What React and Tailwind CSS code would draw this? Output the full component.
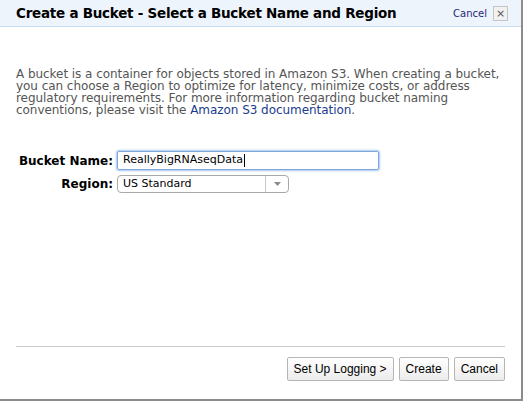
export default function App() {
  return (
    <div className="h-[403px] w-[526px] bg-white font-['DejaVu_Sans',Verdana,sans-serif]">
      <div className="flex h-[401px] w-[523px] flex-col border-r-2 border-b-2 border-[#8c8c8c]">
        <div className="flex h-[27px] shrink-0 items-center justify-between border-b border-[#c9ddf1] bg-[#eef4fc] pl-[16px] pr-[13px]">
          <h1 className="text-[13.5px] font-bold tracking-[-0.25px] text-black">
            Create a Bucket - Select a Bucket Name and Region
          </h1>
          <div className="flex items-center gap-[6px]">
            <span className="text-[10px] text-[#1d2a7a]">Cancel</span>
            <span className="flex h-[15px] w-[15px] items-center justify-center border border-[#c4c4c4] bg-[#f1f1f1] text-[11px] leading-none text-[#555]">
              ×
            </span>
          </div>
        </div>

        <p className="mt-[41px] px-[16px] text-[12px] leading-[12px] tracking-[-0.05px] whitespace-nowrap text-[#555]">
          A bucket is a container for objects stored in Amazon S3. When creating a bucket,
          <br />
          you can choose a Region to optimize for latency, minimize costs, or address
          <br />
          regulatory requirements. For more information regarding bucket naming
          <br />
          conventions, please visit the{' '}
          <span className="text-[#1b3c8c]">Amazon S3 documentation</span>.
        </p>

        <div className="mt-[35px] grid grid-cols-[113px_auto] items-center gap-x-[4px] gap-y-[5px]">
          <label className="text-right text-[12px] font-bold text-black">Bucket Name:</label>
          <div className="flex h-[19px] w-[262px] items-center rounded-[2px] border border-[#7ea6d8] pl-[5px] shadow-[0_0_2px_1px_#a8c8ee] text-[11px] text-black">
            ReallyBigRNAseqData
            <span className="ml-[1px] h-[13px] w-px bg-black" />
          </div>
          <label className="text-right text-[12px] font-bold text-black">Region:</label>
          <div className="flex h-[18px] w-[172px] items-center rounded-[4px] border border-[#a9a9a9] bg-white text-[11px] text-black">
            <span className="flex-1 pl-[5px]">US Standard</span>
            <span className="flex h-full w-[23px] items-center justify-center border-l border-[#c8c8c8]">
              <svg width="7" height="4" viewBox="0 0 7 4">
                <path d="M0 0h7L3.5 4z" fill="#8a8a8a" />
              </svg>
            </span>
          </div>
        </div>

        <div className="flex-1" />

        <div className="mx-[16px] border-t border-[#cccccc]" />
        <div className="flex justify-end gap-[5px] pr-[16px] pt-[10px] pb-[18px] font-['Liberation_Sans',Arial,sans-serif] text-[12px] text-black">
          <button className="h-[24px] rounded-[2px] border border-[#b5b5b5] bg-gradient-to-b from-white to-[#ececec] px-[6px]">
            Set Up Logging &gt;
          </button>
          <button className="h-[24px] rounded-[2px] border border-[#b5b5b5] bg-gradient-to-b from-white to-[#ececec] px-[6px]">
            Create
          </button>
          <button className="h-[24px] rounded-[2px] border border-[#b5b5b5] bg-gradient-to-b from-white to-[#ececec] px-[6px]">
            Cancel
          </button>
        </div>
      </div>
    </div>
  )
}
